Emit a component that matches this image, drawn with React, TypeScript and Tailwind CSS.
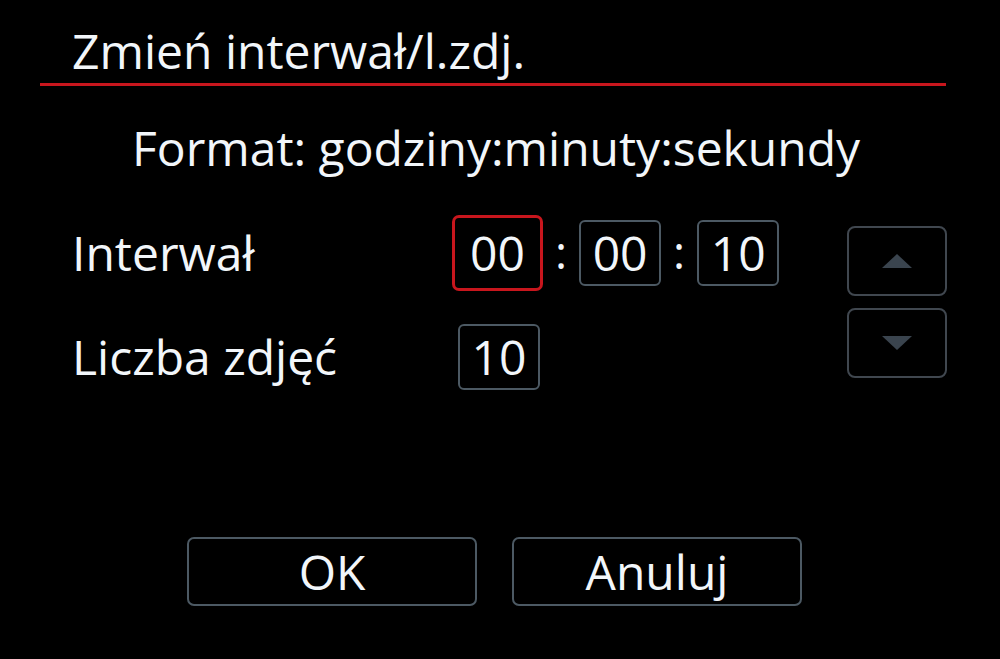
import React from 'react';

const font = { fontFamily: '"Open Sans", "Noto Sans", sans-serif' };

const Field: React.FC<{ value: string; active?: boolean }> = ({ value, active }) =>
  active ? (
    <div className="w-[91px] h-[76px] rounded-[7px] border-[3px] border-[#c8161d] flex items-center justify-center text-[48px] leading-none text-[#f2f6fa]">
      {value}
    </div>
  ) : (
    <div className="w-[82px] h-[66px] rounded-[6px] border-2 border-[#4c5963] flex items-center justify-center text-[48px] leading-none text-[#f2f6fa]">
      {value}
    </div>
  );

const Colon = () => <span className="text-[46px] leading-none text-[#f2f6fa] mx-[12px] pb-[4px]">:</span>;

const Arrow: React.FC<{ up?: boolean }> = ({ up }) => (
  <div className="w-[100px] h-[70px] rounded-[8px] border-2 border-[#40474f] flex items-center justify-center">
    <svg width="30" height="14" viewBox="0 0 30 14">
      {up ? <polygon points="15,0 30,14 0,14" fill="#3a444e" /> : <polygon points="0,0 30,0 15,14" fill="#3a444e" />}
    </svg>
  </div>
);

export default function App() {
  return (
    <div className="w-[1000px] h-[659px] bg-black text-[#f2f6fa] overflow-hidden" style={font}>
      <div className="pl-[72px] pt-[22px] h-[83px] text-[48px] leading-[58px]">Zmień interwał/l.zdj.</div>
      <div className="ml-[40px] w-[906px] h-[3px] bg-[#c8161d]" />
      <div className="pl-[132px] pt-[32px] text-[48px] leading-[60px]">Format: godziny:minuty:sekundy</div>

      <div className="flex mt-[37px]">
        <div className="flex flex-col">
          <div className="flex items-center h-[76px]">
            <div className="w-[452px] pl-[72px] text-[48px]">Interwał</div>
            <Field value="00" active />
            <Colon />
            <Field value="00" />
            <Colon />
            <Field value="10" />
          </div>
          <div className="flex items-center h-[66px] mt-[33px]">
            <div className="w-[458px] pl-[72px] text-[48px]">Liczba zdjęć</div>
            <Field value="10" />
          </div>
        </div>
        <div className="flex flex-col gap-[12px] ml-[68px] mt-[11px]">
          <Arrow up />
          <Arrow />
        </div>
      </div>

      <div className="flex gap-[35px] pl-[187px] mt-[147px]">
        <div className="w-[290px] h-[69px] rounded-[7px] border-2 border-[#4c5963] flex items-center justify-center text-[48px]">OK</div>
        <div className="w-[290px] h-[69px] rounded-[7px] border-2 border-[#4c5963] flex items-center justify-center text-[48px]">Anuluj</div>
      </div>
    </div>
  );
}
